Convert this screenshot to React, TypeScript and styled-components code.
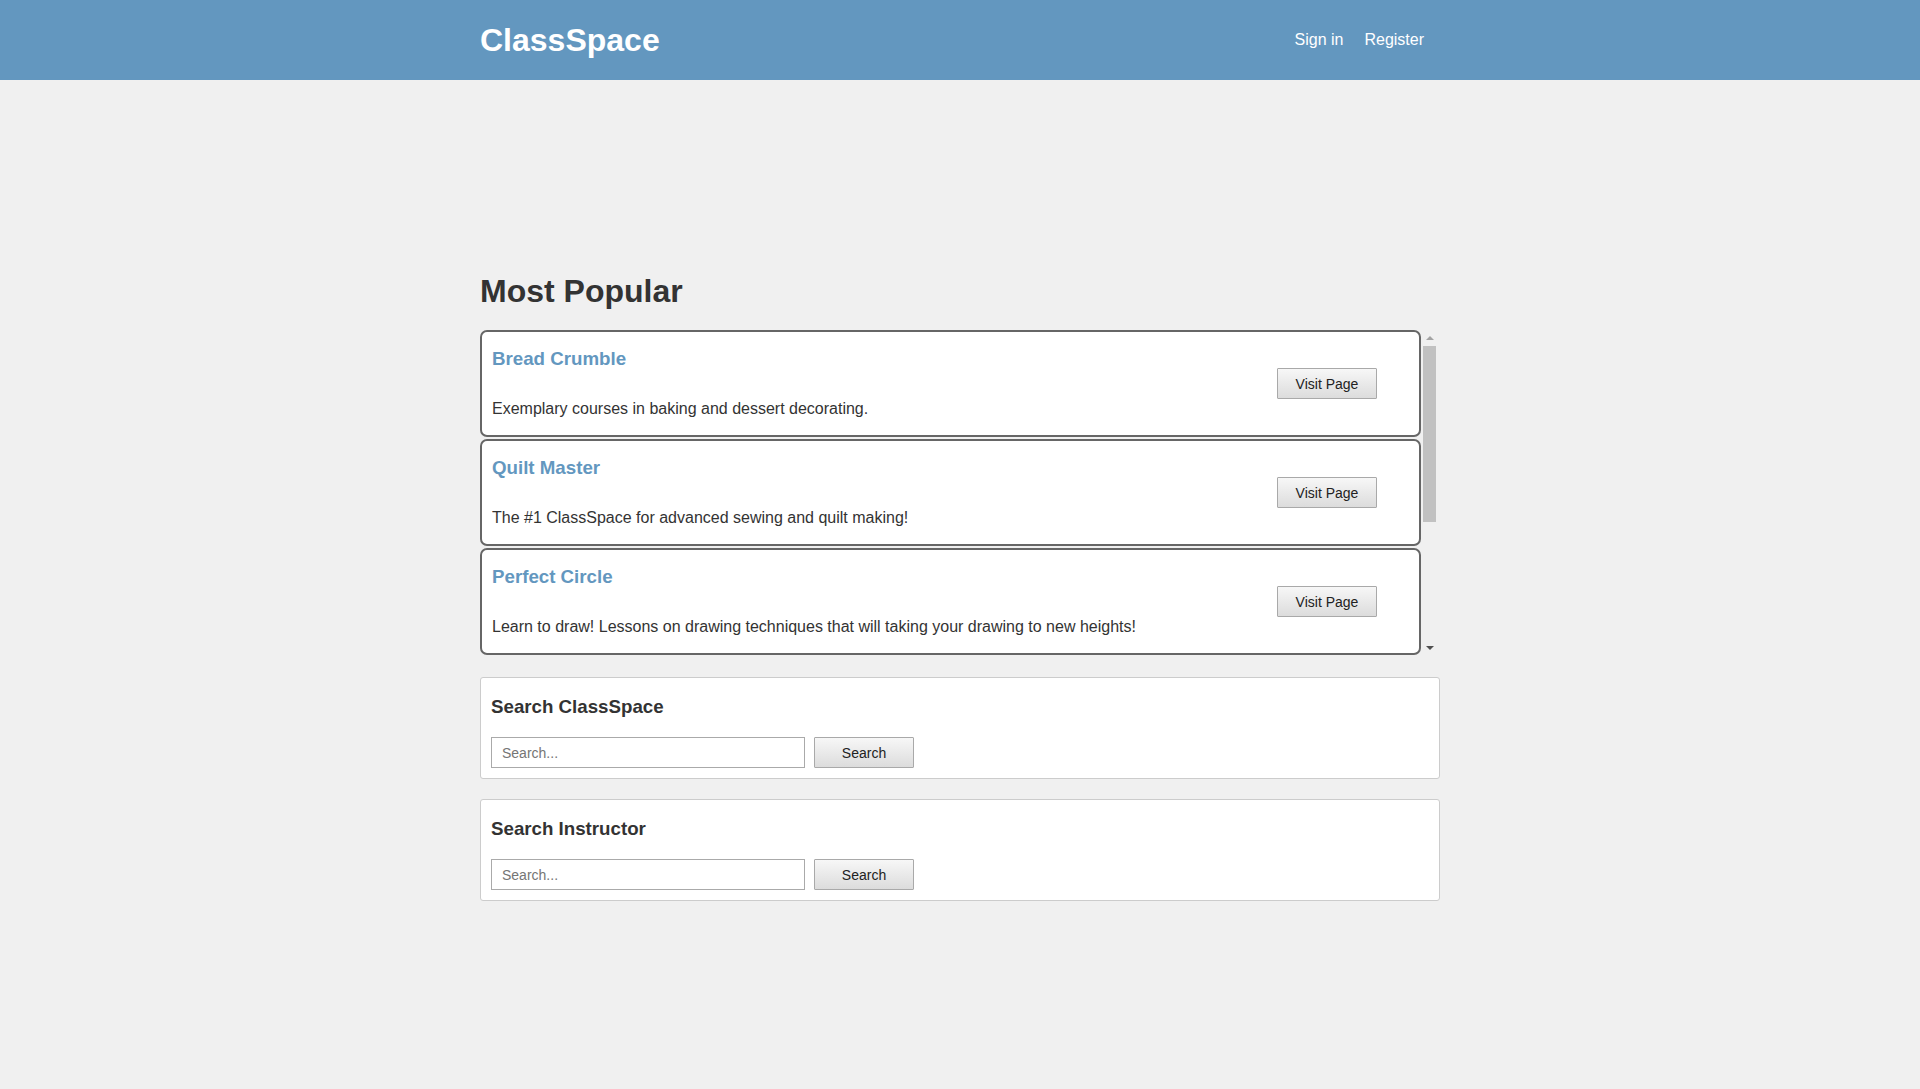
import { createGlobalStyle, styled } from 'styled-components'

const GlobalStyle = createGlobalStyle`
  html, body {
    margin: 0;
    padding: 0;
    background: #f0f0f0;
    font-family: 'Liberation Sans', Arial, sans-serif;
    color: #333;
  }
`

const HeaderBar = styled.header`
  background-color: #6397bf;
  height: 80px;
`

const HeaderInner = styled.div`
  width: 960px;
  height: 100%;
  margin: 0 auto;
  display: flex;
  align-items: center;
  justify-content: space-between;
`

const Logo = styled.a`
  font-size: 32px;
  font-weight: bold;
  color: #fff;
  text-decoration: none;
`

const Nav = styled.nav`
  display: flex;
  gap: 21px;
  margin-right: 16px;
`

const NavLink = styled.a`
  color: #fff;
  font-size: 16px;
  text-decoration: none;
`

const Main = styled.main`
  width: 960px;
  margin: 0 auto;
  padding: 172px 0 40px;
`

const PageTitle = styled.h1`
  font-size: 32px;
  font-weight: bold;
  color: #333;
  margin: 21px 0 20px;
`

const CourseList = styled.div`
  width: 958px;
  height: 327px;
  display: flex;
`

const Viewport = styled.div`
  width: 941px;
  height: 100%;
  overflow: hidden;
`

const ScrollBar = styled.div`
  width: 17px;
  height: 100%;
  display: flex;
  flex-direction: column;
`

const ScrollArrow = styled.div<{ $dir: 'up' | 'down'; $active?: boolean }>`
  height: 16px;
  display: flex;
  justify-content: center;
  align-items: ${(p) => (p.$dir === 'up' ? 'flex-start' : 'flex-end')};
  padding: ${(p) => (p.$dir === 'up' ? '6px 0 0' : '0 0 7px')};
  box-sizing: border-box;

  &::before {
    content: '';
    width: 0;
    height: 0;
    border-left: 4px solid transparent;
    border-right: 4px solid transparent;
    ${(p) =>
      p.$dir === 'up'
        ? `border-bottom: 4px solid ${p.$active ? '#505050' : '#a3a3a3'};`
        : `border-top: 4px solid ${p.$active ? '#505050' : '#a3a3a3'};`}
  }
`

const ScrollTrack = styled.div`
  flex: 1;
  padding: 0 2px;
`

const ScrollThumb = styled.div`
  height: 176px;
  background: #c1c1c1;
`

const CourseCard = styled.div`
  box-sizing: border-box;
  height: 107px;
  margin-bottom: 2px;
  background: #fff;
  border: 2px solid #666;
  border-radius: 7px;
  padding: 0 42px 0 10px;
  display: flex;
  align-items: center;
`

const CourseText = styled.div`
  flex: 1;
  align-self: flex-start;
`

const CourseName = styled.h3`
  font-size: 18.72px;
  font-weight: bold;
  color: #6397bf;
  margin: 16px 0 29.5px;
`

const CourseDesc = styled.p`
  font-size: 16px;
  color: #333;
  margin: 0;
`

const GreyButton = styled.button`
  box-sizing: border-box;
  width: 100px;
  height: 31px;
  border: 1px solid #a9a9a9;
  border-radius: 1px;
  background: linear-gradient(to bottom, #f7f7f7, #dcdcdc);
  font-family: 'Liberation Sans', Arial, sans-serif;
  font-size: 14px;
  color: #222;
  padding: 0;
  cursor: pointer;
`

const Panel = styled.section`
  margin-top: 20px;
  background: #fff;
  border: 1px solid #ccc;
  border-radius: 3px;
  padding: 0 10px 10px;
`

const PanelTitle = styled.h3`
  font-size: 18.72px;
  font-weight: bold;
  color: #333;
  margin: 18px 0 19px;
`

const SearchRow = styled.form`
  display: flex;
  gap: 9px;
`

const SearchInput = styled.input`
  box-sizing: border-box;
  width: 314px;
  height: 31px;
  border: 1px solid #aaa;
  padding: 0 10px;
  font-family: 'Liberation Sans', Arial, sans-serif;
  font-size: 14px;
  color: #333;
  outline: none;

  &::placeholder {
    color: #757575;
  }
`

const courses = [
  { name: 'Bread Crumble', desc: 'Exemplary courses in baking and dessert decorating.' },
  { name: 'Quilt Master', desc: 'The #1 ClassSpace for advanced sewing and quilt making!' },
  {
    name: 'Perfect Circle',
    desc: 'Learn to draw! Lessons on drawing techniques that will taking your drawing to new heights!',
  },
]

const searches = ['Search ClassSpace', 'Search Instructor']

export default function App() {
  return (
    <>
      <GlobalStyle />
      <HeaderBar>
        <HeaderInner>
          <Logo href="#">ClassSpace</Logo>
          <Nav>
            <NavLink href="#">Sign in</NavLink>
            <NavLink href="#">Register</NavLink>
          </Nav>
        </HeaderInner>
      </HeaderBar>
      <Main>
        <PageTitle>Most Popular</PageTitle>
        <CourseList>
          <Viewport>
            {courses.map((c) => (
              <CourseCard key={c.name}>
                <CourseText>
                  <CourseName>{c.name}</CourseName>
                  <CourseDesc>{c.desc}</CourseDesc>
                </CourseText>
                <GreyButton type="button">Visit Page</GreyButton>
              </CourseCard>
            ))}
          </Viewport>
          <ScrollBar>
            <ScrollArrow $dir="up" />
            <ScrollTrack>
              <ScrollThumb />
            </ScrollTrack>
            <ScrollArrow $dir="down" $active />
          </ScrollBar>
        </CourseList>
        {searches.map((title) => (
          <Panel key={title}>
            <PanelTitle>{title}</PanelTitle>
            <SearchRow onSubmit={(e) => e.preventDefault()}>
              <SearchInput placeholder="Search..." />
              <GreyButton type="submit">Search</GreyButton>
            </SearchRow>
          </Panel>
        ))}
      </Main>
    </>
  )
}
